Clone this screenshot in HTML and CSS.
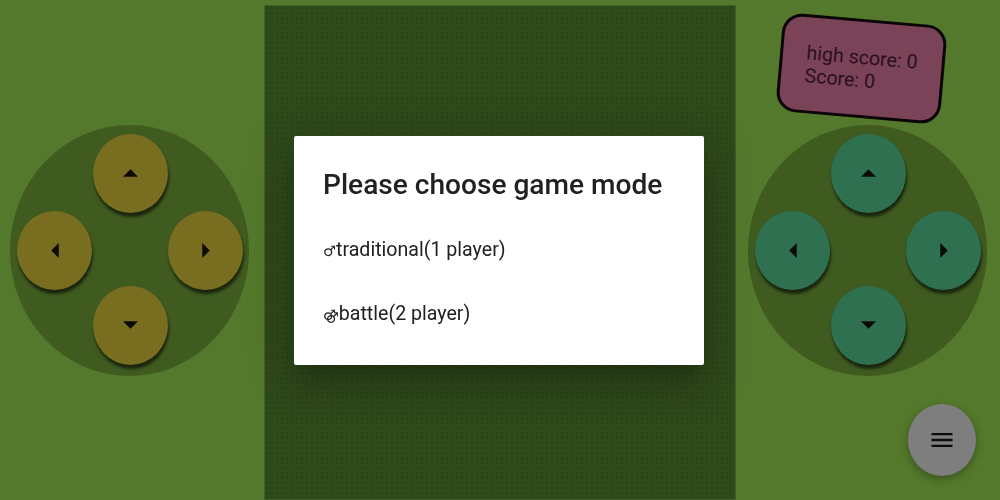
FILE: index.html
```html
<!DOCTYPE html>
<html lang="en">
<head>
<meta charset="utf-8">
<title>Game</title>
<link rel="stylesheet" href="styles.css">
</head>
<body>
<main class="stage">
  <section class="side">
    <div class="dpad">
      <button class="key key-up yellow"><svg viewBox="0 0 16 8" class="arrow-h"><path d="M0 8 8 0 16 8z"/></svg></button>
      <button class="key key-left yellow"><svg viewBox="0 0 8 16" class="arrow-v"><path d="M8 0 0 8 8 16z"/></svg></button>
      <button class="key key-right yellow"><svg viewBox="0 0 8 16" class="arrow-v"><path d="M0 0 8 8 0 16z"/></svg></button>
      <button class="key key-down yellow"><svg viewBox="0 0 16 8" class="arrow-h"><path d="M0 0 8 8 16 0z"/></svg></button>
    </div>
  </section>
  <section class="board"></section>
  <section class="side side-right">
    <div class="score">
      <div>high score: 0</div>
      <div>Score: 0</div>
    </div>
    <div class="dpad">
      <button class="key key-up teal"><svg viewBox="0 0 16 8" class="arrow-h"><path d="M0 8 8 0 16 8z"/></svg></button>
      <button class="key key-left teal"><svg viewBox="0 0 8 16" class="arrow-v"><path d="M8 0 0 8 8 16z"/></svg></button>
      <button class="key key-right teal"><svg viewBox="0 0 8 16" class="arrow-v"><path d="M0 0 8 8 0 16z"/></svg></button>
      <button class="key key-down teal"><svg viewBox="0 0 16 8" class="arrow-h"><path d="M0 0 8 8 16 0z"/></svg></button>
    </div>
  </section>
</main>
<button class="fab"><svg viewBox="0 0 24 24" class="fab-icon"><path d="M3 18h18v-2H3zm0-5h18v-2H3zm0-7v2h18V6z"/></svg></button>
<div class="overlay">
  <div class="dialog">
    <h2 class="dialog-title">Please choose game mode</h2>
    <p class="option"><span class="sym">♂</span>traditional(1 player)</p>
    <p class="option"><span class="sym">⚣</span>battle(2 player)</p>
  </div>
</div>
</body>
</html>
```
FILE: styles.css
```css
* { box-sizing: border-box; }
html, body { margin: 0; height: 100%; }
body {
  background: #54782c;
  font-family: Roboto, "Liberation Sans", sans-serif;
  overflow: hidden;
}
.stage {
  display: grid;
  grid-template-columns: 264px 472px 264px;
  height: 500px;
}
.side {
  display: flex;
  align-items: center;
  justify-content: center;
  position: relative;
  padding-left: 1px;
  padding-right: 6px;
}
.side-right { padding-left: 0; padding-right: 1px; }
.dpad {
  width: 239px;
  height: 251px;
  border-radius: 50%;
  background: #3f5b20;
  display: grid;
  grid-template-columns: 75.5px 75.5px 75.5px;
  grid-template-rows: 77px 75px 79px;
  grid-template-areas: ". up ." "left . right" ". down .";
  padding: 9px 7px;
  flex: none;
}
.key {
  width: 75px;
  height: 79px;
  border: 0;
  padding: 0;
  border-radius: 50%;
  box-shadow: 1px 4px 3px rgba(0, 0, 0, .6);
  display: flex;
  align-items: center;
  justify-content: center;
}
.key-up { grid-area: up; }
.key-left { grid-area: left; }
.key-right { grid-area: right; }
.key-down { grid-area: down; }
.yellow { background: #796d1f; }
.teal { background: #2f7050; }
.arrow-h { width: 15px; height: 8px; fill: #0d0b05; }
.arrow-v { width: 8px; height: 15px; fill: #0d0b05; }
.board {
  margin-top: 5px;
  background-color: #2f4a1b;
  background-image: radial-gradient(circle at 2px 2px, #2a4416 1px, transparent 1.5px);
  background-size: 5px 5px;
  border: 1px solid #3f6022;
}
.score {
  position: absolute;
  left: 43px;
  top: 19px;
  width: 165px;
  height: 99px;
  padding: 23.5px 23.5px;
  background: #7a4358;
  border: 3px solid #0b0508;
  border-radius: 20px;
  transform: rotate(5deg);
  font-size: 19.6px;
  line-height: 23px;
  color: #2a0f1c;
  white-space: nowrap;
}
.fab {
  position: fixed;
  left: 908px;
  top: 404px;
  width: 68px;
  height: 72px;
  border: 0;
  border-radius: 50%;
  background: #7e7e7e;
  box-shadow: 0 3px 8px rgba(0, 0, 0, .3);
  display: flex;
  align-items: center;
  justify-content: center;
  padding: 0;
}
.fab-icon { width: 28px; height: 28px; fill: #0c0c0c; }
.overlay {
  position: fixed;
  inset: 0;
  display: flex;
  align-items: center;
  justify-content: center;
  padding-right: 2px;
  padding-top: 1px;
}
.dialog {
  width: 410px;
  height: 229px;
  background: #fff;
  border-radius: 2px;
  padding: 30px 29px;
  box-shadow: 0 11px 15px -7px rgba(0,0,0,.2), 0 24px 38px 3px rgba(0,0,0,.14), 0 9px 46px 8px rgba(0,0,0,.12);
  color: #212121;
}
.dialog-title {
  margin: 0 0 34px;
  font-size: 28.1px;
  font-weight: 500;
  line-height: 38px;
}
.option {
  margin: 0 0 40px;
  font-size: 19.6px;
  line-height: 24px;
}
.sym { font-family: "DejaVu Sans", sans-serif; font-size: 14.5px; line-height: 0; }
```
